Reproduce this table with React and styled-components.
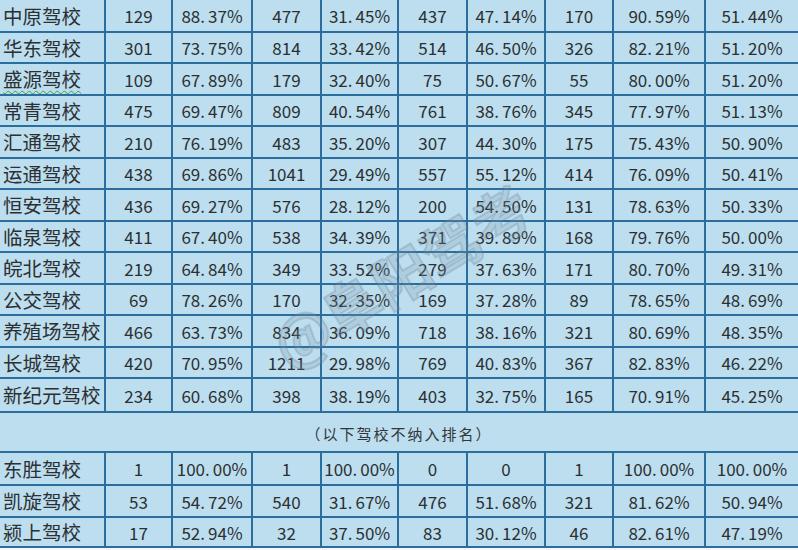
import React from "react";
import styled, { createGlobalStyle } from "styled-components";

const GlobalStyle = createGlobalStyle`
  html, body {
    margin: 0;
    padding: 0;
    background: #f4f8fa;
    overflow: hidden;
  }
`;

const Page = styled.div`
  position: relative;
  width: 798px;
  height: 550px;
  overflow: hidden;
  font-family: "Noto Sans CJK SC", "Noto Sans", sans-serif;
`;

// grid lines come from the gap showing the dark background through
const Sheet = styled.div`
  display: grid;
  grid-template-columns: 104px 65px 78px 67px 75px 67px 76px 66px 90px 92px;
  grid-template-rows: ${(p) => p.$rows.map((h) => h + "px").join(" ")};
  gap: 2px;
  background: #2b6d9d;
  border-bottom: 2px solid #2b6d9d;
  color: #2c3032;
`;

const Cell = styled.div`
  display: flex;
  align-items: center;
  justify-content: center;
  background: #bcdeef;
  font-size: 17px;
  line-height: 1;
  white-space: nowrap;
  overflow: hidden;
`;

const NameCell = styled(Cell)`
  justify-content: flex-start;
  padding-left: 3px;
  font-size: 19.5px;
`;

const NoteCell = styled(Cell)`
  grid-column: 1 / -1;
  padding-top: 2px;
  font-size: 15px;
  letter-spacing: 2px;
  color: #33373a;
`;

const Squiggle = styled.span`
  text-decoration: underline wavy #3aa23a;
  text-decoration-thickness: 1px;
  text-underline-offset: 3px;
`;

const Dot = styled.span`
  margin-right: 3px;
`;

const Watermark = styled.div`
  position: absolute;
  left: 400px;
  top: 274px;
  transform: translate(-50%, -50%) rotate(-31deg);
  font-size: 58px;
  font-weight: 700;
  white-space: nowrap;
  color: rgba(130, 150, 170, 0.24);
  -webkit-text-stroke: 2px rgba(95, 115, 135, 0.24);
  pointer-events: none;
`;

const ranked = [
  ["中原驾校", "129", "88.37%", "477", "31.45%", "437", "47.14%", "170", "90.59%", "51.44%"],
  ["华东驾校", "301", "73.75%", "814", "33.42%", "514", "46.50%", "326", "82.21%", "51.20%"],
  ["盛源驾校", "109", "67.89%", "179", "32.40%", "75", "50.67%", "55", "80.00%", "51.20%"],
  ["常青驾校", "475", "69.47%", "809", "40.54%", "761", "38.76%", "345", "77.97%", "51.13%"],
  ["汇通驾校", "210", "76.19%", "483", "35.20%", "307", "44.30%", "175", "75.43%", "50.90%"],
  ["运通驾校", "438", "69.86%", "1041", "29.49%", "557", "55.12%", "414", "76.09%", "50.41%"],
  ["恒安驾校", "436", "69.27%", "576", "28.12%", "200", "54.50%", "131", "78.63%", "50.33%"],
  ["临泉驾校", "411", "67.40%", "538", "34.39%", "371", "39.89%", "168", "79.76%", "50.00%"],
  ["皖北驾校", "219", "64.84%", "349", "33.52%", "279", "37.63%", "171", "80.70%", "49.31%"],
  ["公交驾校", "69", "78.26%", "170", "32.35%", "169", "37.28%", "89", "78.65%", "48.69%"],
  ["养殖场驾校", "466", "63.73%", "834", "36.09%", "718", "38.16%", "321", "80.69%", "48.35%"],
  ["长城驾校", "420", "70.95%", "1211", "29.98%", "769", "40.83%", "367", "82.83%", "46.22%"],
  ["新纪元驾校", "234", "60.68%", "398", "38.19%", "403", "32.75%", "165", "70.91%", "45.25%"],
];

const unranked = [
  ["东胜驾校", "1", "100.00%", "1", "100.00%", "0", "0", "1", "100.00%", "100.00%"],
  ["凯旋驾校", "53", "54.72%", "540", "31.67%", "476", "51.68%", "321", "81.62%", "50.94%"],
  ["颍上驾校", "17", "52.94%", "32", "37.50%", "83", "30.12%", "46", "82.61%", "47.19%"],
];

// row heights: 13 ranked rows, the note row, 3 unranked rows
const rowHeights = [31, 29, 30, 29, 30, 29, 30, 29, 30, 29, 30, 29, 32, 38, 31, 30, 28];

// "88.37%" is shown with a wide gap after the point, as in the source sheet
function Num({ value }) {
  const i = value.indexOf(".");
  if (i < 0) return value;
  return (
    <>
      <Dot>{value.slice(0, i + 1)}</Dot>
      {value.slice(i + 1)}
    </>
  );
}

function DataRow({ cells }) {
  const [name, ...nums] = cells;
  return (
    <>
      <NameCell>
        {name === "盛源驾校" ? <Squiggle>{name}</Squiggle> : name}
      </NameCell>
      {nums.map((n, i) => (
        <Cell key={i}>
          <Num value={n} />
        </Cell>
      ))}
    </>
  );
}

export default function App() {
  return (
    <Page>
      <GlobalStyle />
      <Sheet $rows={rowHeights}>
        {ranked.map((r) => (
          <DataRow key={r[0]} cells={r} />
        ))}
        <NoteCell>（以下驾校不纳入排名）</NoteCell>
        {unranked.map((r) => (
          <DataRow key={r[0]} cells={r} />
        ))}
      </Sheet>
      <Watermark>@阜阳驾考</Watermark>
    </Page>
  );
}
